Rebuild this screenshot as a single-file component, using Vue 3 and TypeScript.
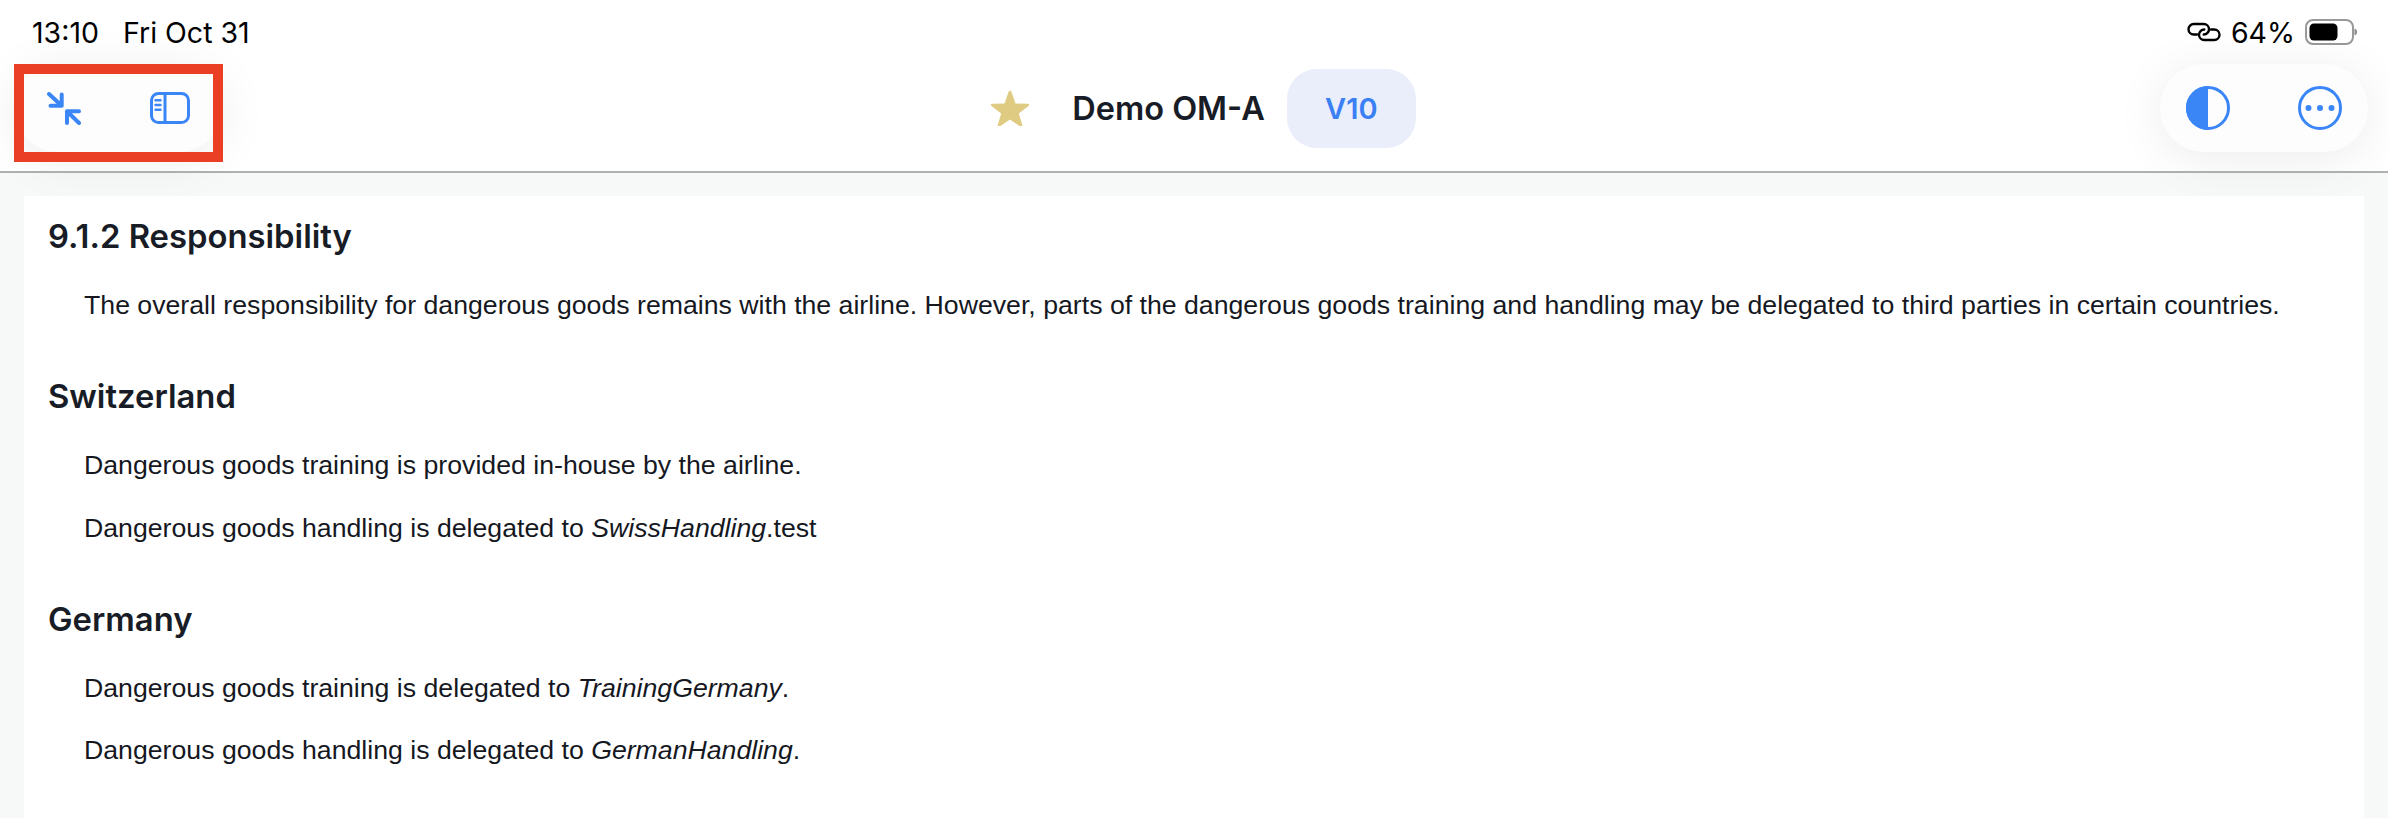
<script setup lang="ts">
const sections = [
  {
    title: 'Switzerland',
    lines: [
      { before: 'Dangerous goods training is provided in-house by the airline.' },
      { before: 'Dangerous goods handling is delegated to ', em: 'SwissHandling', after: '.test' },
    ],
  },
  {
    title: 'Germany',
    lines: [
      { before: 'Dangerous goods training is delegated to ', em: 'TrainingGermany', after: '.' },
      { before: 'Dangerous goods handling is delegated to ', em: 'GermanHandling', after: '.' },
    ],
  },
]
</script>

<template>
  <div class="page">
    <header class="top">
      <div class="status">
        <div class="status-time"><span>13:10</span><span>Fri Oct 31</span></div>
        <div class="status-right">
          <svg class="link" width="34" height="20" viewBox="0 0 34 20" fill="none" stroke="#000" stroke-width="2.4" stroke-linecap="round">
            <path d="M10 12.500H6.750a5.250 5.250 0 0 1 0-10.500H16.750a5.250 5.250 0 0 1 0 10.500" />
            <path d="M24 7.500h3.250a5.250 5.250 0 0 1 0 10.500H17.250a5.250 5.250 0 0 1 0-10.500" />
          </svg>
          <span>64%</span>
          <svg class="battery" width="52" height="26" viewBox="0 0 52 26">
            <rect x="1" y="1" width="47" height="24" rx="7" fill="none" stroke="#999" stroke-width="2" />
            <rect x="4.500" y="4.500" width="28" height="17" rx="4.500" fill="#000" />
            <path d="M49.500 9.500c2 .8 2.500 2 2.500 3.500s-.5 2.700-2.500 3.500z" fill="#888" />
          </svg>
        </div>
      </div>
      <div class="bar">
        <div class="pill pill-left">
          <svg width="34" height="33" viewBox="0 0 34 33" fill="none" stroke="#3b86f7" stroke-width="4" stroke-linecap="round" stroke-linejoin="round">
            <path d="M2 2 14.700 13.700M3.500 13.700H14.700V2.500" />
            <path d="M32 31 20 19.300M32 19.300H20V31" />
          </svg>
          <svg width="40" height="32" viewBox="0 0 40 32" fill="none" stroke="#3b86f7" stroke-width="3" stroke-linecap="round">
            <rect x="1.500" y="1.500" width="37" height="29" rx="7" />
            <path d="M15 2v28" />
            <path d="M5.500 8.300h5M5.500 13h5M5.500 17.700h5" stroke-width="2.400" />
          </svg>
          <div class="highlight"></div>
        </div>
        <div class="title">
          <svg class="star" width="38" height="36" viewBox="0 0 38 36">
            <path d="M19 .8c.8 0 1.200.5 1.500 1.300l4 11.500 12.200.2c1.500 0 2 1.400.8 2.300l-9.700 7.300 3.500 11.600c.4 1.400-.8 2.300-2 1.500L19 29.600 8.700 36.500c-1.200.8-2.400-.1-2-1.500l3.500-11.600L.5 16.100c-1.200-.9-.7-2.300.8-2.300l12.200-.2 4-11.500c.3-.8.7-1.300 1.500-1.300z" fill="#e0cb82" />
          </svg>
          <span class="name">Demo OM-A</span>
          <span class="version">V10</span>
        </div>
        <div class="pill pill-right">
          <svg width="44" height="44" viewBox="0 0 44 44">
            <circle cx="22" cy="22" r="20.500" fill="none" stroke="#3b86f7" stroke-width="3" />
            <path d="M22 0a22 22 0 0 0 0 44z" fill="#3b86f7" />
          </svg>
          <svg width="44" height="44" viewBox="0 0 44 44">
            <circle cx="22" cy="22" r="20.500" fill="none" stroke="#3b86f7" stroke-width="3" />
            <circle cx="10.500" cy="22" r="3" fill="#3b86f7" />
            <circle cx="22" cy="22" r="3" fill="#3b86f7" />
            <circle cx="33.500" cy="22" r="3" fill="#3b86f7" />
          </svg>
        </div>
      </div>
    </header>
    <main class="content">
      <article class="card">
        <h2 class="first">9.1.2 Responsibility</h2>
        <p>The overall responsibility for dangerous goods remains with the airline. However, parts of the dangerous goods training and handling may be delegated to third parties in certain countries.</p>
        <section v-for="s in sections" :key="s.title">
          <h2>{{ s.title }}</h2>
          <p v-for="(l, i) in s.lines" :key="i">{{ l.before }}<em v-if="l.em">{{ l.em }}</em>{{ l.after }}</p>
        </section>
      </article>
    </main>
  </div>
</template>

<style>
html, body {
  margin: 0;
  background: #f7f9f9;
}
</style>

<style scoped>
.page {
  width: 2388px;
  height: 818px;
  overflow: hidden;
  display: flex;
  flex-direction: column;
  background: #f7f9f9;
}

.top {
  position: relative;
  z-index: 1;
  background: #fff;
  border-bottom: 2px solid #b0b2b2;
  height: 173px;
  box-sizing: border-box;
  padding: 0 20px 0 14px;
  flex-shrink: 0;
}

.status {
  height: 64px;
  display: flex;
  align-items: center;
  justify-content: space-between;
  font-family: Inter, sans-serif;
  font-size: 28.500px;
  color: #000;
}

.status-time {
  display: flex;
  gap: 24px;
  padding-left: 18px;
}

.status-right {
  display: flex;
  align-items: center;
  gap: 10px;
  padding-right: 11px;
}

.bar {
  display: grid;
  grid-template-columns: 1fr auto 1fr;
  align-items: center;
  height: 88px;
}

.pill {
  box-sizing: border-box;
  display: flex;
  align-items: center;
  justify-content: space-between;
  height: 88px;
  border-radius: 44px;
  background: #fdfdfd;
  box-shadow: 0 6px 50px rgba(0, 0, 0, 0.08);
}

.pill-left {
  position: relative;
  justify-self: start;
  width: 209px;
  padding: 0 33px;
}

.highlight {
  position: absolute;
  left: 0;
  right: 0;
  top: 0;
  bottom: -10px;
  border: 10px solid #ea3f25;
}

.pill-right {
  justify-self: end;
  width: 208px;
  padding: 0 26px;
}

.title {
  display: flex;
  align-items: center;
  margin-left: 25px;
  font-family: Inter, sans-serif;
  color: #181c26;
}

.star {
  margin-right: 43px;
}

.name {
  font-size: 32.500px;
  font-weight: 600;
  margin-right: 22px;
}

.version {
  width: 129px;
  height: 79px;
  display: flex;
  align-items: center;
  justify-content: center;
  border-radius: 30px;
  background: #e9eefa;
  color: #3b7ff5;
  font-size: 29px;
  font-weight: 600;
}

.content {
  flex: 1;
  padding: 23px 24px 0;
  min-height: 0;
}

.card {
  background: #fff;
  height: 100%;
  padding: 18px 24px;
  box-sizing: border-box;
}

h2 {
  font-family: Inter, sans-serif;
  font-size: 32.800px;
  font-weight: 600;
  color: #181c26;
  margin: 51px 0 0;
  line-height: 44px;
}

h2.first {
  margin-top: 0;
}

p {
  font-family: "Liberation Sans", sans-serif;
  font-size: 26.680px;
  line-height: 36px;
  color: #15181f;
  margin: 29px 0 0 36px;
}

p + p {
  margin-top: 26.500px;
}
</style>
